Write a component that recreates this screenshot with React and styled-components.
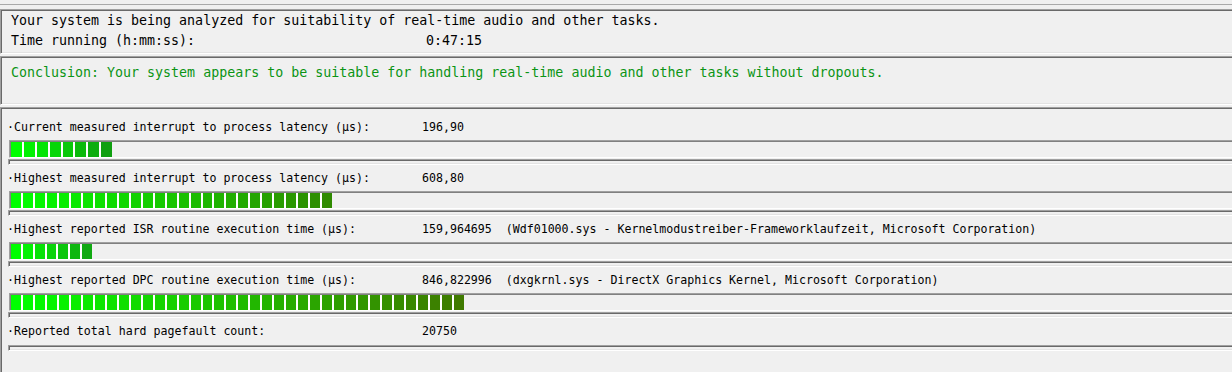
import React from "react";
import styled, { createGlobalStyle } from "styled-components";

const GlobalStyle = createGlobalStyle`
    html, body {
        margin: 0;
        padding: 0;
        background: #f0f0f0;
        overflow: hidden;
    }
    body {
        font-family: "DejaVu Sans Mono", "Liberation Mono", monospace;
        color: #000;
    }
`;

const Window = styled.div`
    width: 1232px;
    height: 372px;
    overflow: hidden;
    display: flex;
    flex-direction: column;
`;

const TopRule = styled.div`
    flex-shrink: 0;
    height: 4px;
    border-bottom: 1px solid #a9a9a9;
    margin-bottom: 4px;
`;

const Panel = styled.div`
    flex-shrink: 0;
    width: calc(100% + 20px);
    box-sizing: border-box;
    border: 1px solid;
    border-color: #a0a0a0 #ffffff #ffffff #a0a0a0;
    box-shadow: inset 1px 1px #696969, inset -1px -1px #e3e3e3;
    padding: ${props => props.$pad || "1px 0 1px 10px"};
    margin-bottom: 2px;
    height: ${props => props.$height};
`;

const Line = styled.div`
    display: grid;
    grid-template-columns: 415px auto;
    height: ${props => props.$h || 20}px;
    line-height: ${props => props.$h || 20}px;
    font-size: ${props => props.$small ? "11.6px" : "13.3px"};
    white-space: pre;
    color: ${props => props.$green ? "#0a9414" : "#000"};
`;

const Row = styled.div`
    display: flex;
    flex-direction: column;
`;

const Bar = styled.div`
    margin-left: 2px;
    height: 18px;
    box-sizing: border-box;
    border-top: 1px solid #a0a0a0;
    border-left: 1px solid #a0a0a0;
    border-bottom: 1px solid #ffffff;
    box-shadow: inset 1px 1px #808080;
    padding: 1px 0 0 1px;
    display: flex;
`;

const Fill = styled.div`
    display: flex;
    gap: 2px;
    height: 15px;
    background: #ffffff;
`;

const Chunk = styled.div`
    flex: 1;
    height: 100%;
`;

const Strip = styled.div`
    margin: 1px 0 0 1px;
    height: 6px;
    box-sizing: border-box;
    border: 1px solid;
    border-color: #a0a0a0 #ffffff #ffffff #a0a0a0;
    box-shadow: inset 1px 1px #696969, inset -1px -1px #e3e3e3;
`;

const mix = (a, b, t) => {
    const pa = [1, 3, 5].map(i => parseInt(a.slice(i, i + 2), 16));
    const pb = [1, 3, 5].map(i => parseInt(b.slice(i, i + 2), 16));
    return `rgb(${pa.map((v, i) => Math.round(v + (pb[i] - v) * t)).join(",")})`;
};

const rows = [
    { label: "·Current measured interrupt to process latency (µs):", value: "196,90", chunks: 8, width: 101, end: "#0f9f10" },
    { label: "·Highest measured interrupt to process latency (µs):", value: "608,80", chunks: 27, width: 321, end: "#2f8a00" },
    { label: "·Highest reported ISR routine execution time (µs):", value: "159,964695  (Wdf01000.sys - Kernelmodustreiber-Frameworklaufzeit, Microsoft Corporation)", chunks: 7, width: 81, end: "#11a912" },
    { label: "·Highest reported DPC routine execution time (µs):", value: "846,822996  (dxgkrnl.sys - DirectX Graphics Kernel, Microsoft Corporation)", chunks: 38, width: 453, end: "#3f7a00" },
    { label: "·Reported total hard pagefault count:", value: "20750" },
];

const MeterBar = ({ chunks, width, end }) => (
    <Bar>
        <Fill style={{ width }}>
            {Array.from({ length: chunks }, (_, i) => (
                <Chunk key={i} style={{ background: mix("#00ff00", end, chunks > 1 ? i / (chunks - 1) : 0) }} />
            ))}
        </Fill>
    </Bar>
);

export default function App() {
    return (
        <Window>
            <GlobalStyle />
            <TopRule />
            <Panel $height="45px">
                <Line>Your system is being analyzed for suitability of real-time audio and other tasks.</Line>
                <Line>
                    <span>Time running (h:mm:ss):</span>
                    <span>0:47:15</span>
                </Line>
            </Panel>
            <Panel $height="49px" $pad="6px 0 0 10px">
                <Line $green>Conclusion: Your system appears to be suitable for handling real-time audio and other tasks without dropouts.</Line>
            </Panel>
            <Panel $height="300px" $pad="6px 0 0 6px">
                {rows.map((r, i) => (
                    <Row key={i}>
                        <Line $h={26} $small>
                            <span>{r.label}</span>
                            <span>{r.value}</span>
                        </Line>
                        {r.chunks ? <MeterBar {...r} /> : null}
                        <Strip />
                    </Row>
                ))}
            </Panel>
        </Window>
    );
}
